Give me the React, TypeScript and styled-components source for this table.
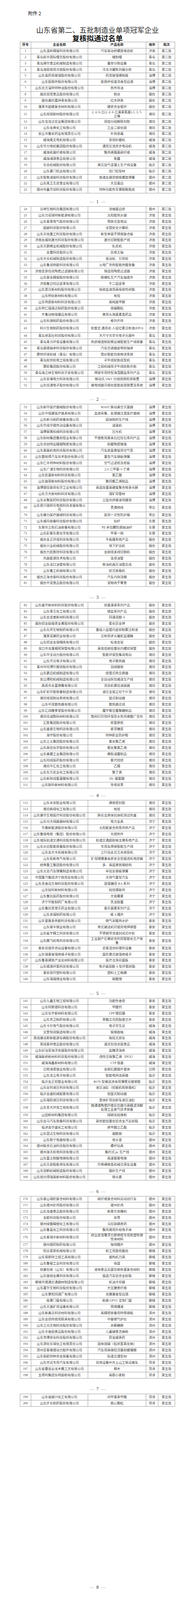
import styled, { createGlobalStyle } from 'styled-components';

// The capture only holds 4096px of height, so every vertical measure of the
// 4839px-tall document is squeezed by this factor; widths stay as they are.
const K = 4096 / 4839;
const v = (px: number): number => +(px * K).toFixed(3);

const FIRST_SHEET_H = v(623.3);
const SHEET_H = v(598.73);
const ROW_H = v(18.76);
const TALL_H = v(26.3);
const LINE = '#9a9a9a';

const GlobalStyle = createGlobalStyle`
  html, body {
    margin: 0;
    padding: 0;
    background: #fff;
  }
  body {
    font-family: "Liberation Serif", "Noto Sans CJK SC", serif;
    color: #444;
  }
`;

// company|product|city, "^" marks a line break inside a cell
const RAW = `山东温岭精锻科技有限公司|汽车驱动桥螺旋锥齿轮|济南
青岛前丰国际帽艺股份有限公司|缝制帽|青岛
青岛建华食品机械制造有限公司|屠宰分割设备|青岛
青岛海容商用冷链股份有限公司|冷冻冷藏陈列展示柜|青岛
山东省药用玻璃股份有限公司|药用玻璃模制瓶|淄博
山东扳倒井股份有限公司|扳倒井低度浓香型白酒|淄博
山东北方淄特特种油股份有限公司|热传导油|淄博
烟台双塔食品股份有限公司|粉丝|烟台
烟台美时嘉钟表有限公司|红木钟表|烟台
蓬莱市超硬复合材料有限公司|硬质合金辊环|烟台
山东旭锐新材股份有限公司|2, 4, 6-三(2, 4, 6-三溴苯氧基)-1, 3, 5-^三嗪|潍坊
山东宝龙达实业集团有限公司|双组分硅酮密封胶|潍坊
山东金典化工有限公司|工业二硫化碳|潍坊
安丘市鲁安药业有限责任公司|扑热息痛|潍坊
威海奥文电机有限公司|家用砂磨机|威海
山东华力电机集团股份有限公司|通用交流异步电动机|威海
威海拓展纤维有限公司|聚丙烯腈基碳纤维|威海
威海浦源食品有限公司|鱼露|威海
东岳机械股份有限公司|蒸压加气混凝土生产线设备|临沂
山东豪门铝业有限公司|铝门铝型材|临沂
山东智衡减振科技股份有限公司|铁道车辆用钢铁螺旋弹簧|德州
山东禹王生态食业有限公司|大豆蛋白|德州
德州市鑫华润科技股份有限公司|特种功能性军需鞋靴鞋底|德州
谷神生物科技集团有限公司|浓缩蛋白质|德州
山东力诺瑞特新能源有限公司|太阳能热水器|济南
山东泰莱电气股份有限公司|预装式变电站|济南
超越科技股份有限公司|全国安全计算机|济南
山东天铭重工科技股份有限公司|新型单面不锈钢复合板|济南
济南金威刻激光科技股份有限公司|激光切割智能产线|济南
山东天鹅棉业机械股份有限公司|轧花机|济南
金雷科技股份公司|风电主轴|济南
山东大众机械制造股份有限公司|驱动轮、引导轮|济南
山东鲁润热能科技有限公司|火电厂余热智能供暖装备|济南
济南圣泉倍进陶瓷过滤器有限公司|铸造用陶瓷过滤器|济南
山东泰金精锻股份有限公司|楔横轧生产汽车轴类件|济南
济南鲁日钧达皮革有限公司|牛二层皮革|济南
山东昊月新材料股份有限公司|吸收血液用高吸收性树脂|济南
山东明化新材料有限公司|吡啶|济南
山东明泉新材料科技有限公司|高纯度甲醇|济南
山东明仁福瑞达制药股份有限公司|颈痛颗粒|济南
齐鲁动物保健品有限公司|兽用头孢菌素类药品|济南
山东科源制药股份有限公司|格列齐特|济南
科兴生物制药股份有限公司|依普定,通用名:人促红素注射液(EPO)|济南
青岛卓英社科技股份有限公司|大尺寸光学光电子元器件|青岛
青岛青力环保设备有限公司|热质熔渣制岩棉云端智能生产线装备|青岛
青岛泰德轴承科技股份有限公司|汽车空调器皮带轮轴承|青岛
赛特环球机械（青岛）有限公司|筒纱智能包装物流系统|青岛
青岛软控机电工程有限公司|子午线轮胎成型机|青岛
赛轮集团股份有限公司|工程机械用子午线轮胎外胎|青岛
青岛海之林生物科技开发有限公司|焊接专用特型海藻酸盐系列产品|青岛
山东安澜电力科技有限公司|移动式 10kV 分线线损检测装置|淄博
山东信通电子股份有限公司|输电线路可视化智能巡视装置及系统|淄博
山东新华医疗器械股份有限公司|MAST 脉动真空灭菌器|淄博
山东中保康医疗器具有限公司|血液采集、处理输注类医疗器械|淄博
山东新马制药装备有限公司|固体制剂生产线|淄博
山东华成中德传动设备有限公司|减速机|淄博
淄博泰鼎机械科技有限公司|压光机|淄博
山东耐材集团鲁耐窑业有限公司|干熄焦用莫来石红柱石系列产品|淄博
山东合创明业精细陶瓷有限公司|耐磨陶瓷微珠|淄博
山东泰展机电科技股份有限公司|汽车底盘悬架用空气泵|淄博
山东雷帕得汽车技术股份有限公司|重型汽车钢板弹簧|淄博
山东仁丰特种材料股份有限公司|空气过滤纸及纸板|淄博
山东广浦生物科技有限公司|2,3-二甲基-1-丁烯|淄博
山东民基新材料科技有限公司|氯乙酸|淄博
山东森荣新材料股份有限公司|聚四氟乙烯制品|淄博
淄博德信联邦化学工业有限公司|高固含量高硬度聚合物多元醇|淄博
山东方大新材料科技有限公司|煤矿用管材|淄博
山东永聚医药科技股份有限公司|三层共挤输液用膜袋|淄博
山东泉兴银桥光电缆科技发展有限公^司|贯通地线|枣庄
山东康力医疗器械科技有限公司|医用一次性防护服|枣庄
山东威玛装备科技股份有限公司|钻杆|东营
东营市三和石油装备有限公司|PE 半包覆防腐抽油杆|东营
山东彩客东奥化学有限公司|甲苯一硝|东营
烟台金正环保科技有限公司|平板膜系统产品|烟台
烟台兴业机械股份有限公司|地下铲运机|烟台
烟台力凯数控科技有限公司|金刚线多线切割机|烟台
杰森能源技术有限公司|连续油管|烟台
山东龙口油管有限公司|柴油机高压油管总成|烟台
山东鲁工机械有限公司|轮式装载机|烟台
烟台正海合泰科技股份有限公司|汽车内饰顶棚|烟台
烟台中宠食品股份有限公司|宠物肉干零食|烟台
山东盛华新材料科技股份有限公司|烷基溴苯系列产品|烟台
山东莱玉化工有限公司|镁盐系列产品|烟台
山东金宜善新材料有限公司|四溴双酚 A|烟台
烟台招金励福贵金属股份有限公司|氰化亚金钾|烟台
山东先声生物制药有限公司|重组人血管内皮抑制素注射液|烟台
蓬莱诺康药业有限公司|注射用矛头蝮蛇血凝酶|烟台
山东招金金银精炼有限公司|标准金锭|烟台
龙口市龙蓬精密铜管有限公司|高效低耗轻量化内螺纹铜管|烟台
山东华全动力股份有限公司|智能环保型集成电站|潍坊
山东开元电子有限公司|电子散热器|潍坊
青州市坦博尔服饰股份有限公司|羽绒服装|潍坊
山东豪迈机械制造有限公司|绕管式热交换器|潍坊
安丘博阳机械制造有限公司|全自动拆包输送生产线|潍坊
昌邑市永富弹簧有限公司|洗衣机悬挂减振器|潍坊
山东矿机华能装备制造有限公司|液压支架立柱千斤顶|潍坊
潍坊埃锐制动系统有限公司|鼓式制动器|潍坊
山东中茂散热器有限公司|散热器总成|潍坊
山东汇润膳食堂股份有限公司|魔芋葡甘露聚糖制品|潍坊
潍坊佳诚数码材料有限公司|数码打印用环保型水性丙烯酸广告布|潍坊
汇胜集团股份有限公司|纸管原纸|潍坊
山东盛泰生物科技有限公司|麦芽糖浆|潍坊
海宇股份有限公司|特种职业防护鞋|潍坊
山东三义集团股份有限公司|氯化聚乙烯|潍坊
山东高信化学股份有限公司|氯化聚氯乙烯|潍坊
山东美晨工业集团有限公司|橡胶减震制品|潍坊
山东同成医药股份有限公司|氯代烷烃|潍坊
潍坊中汇化工有限公司|乙腈|潍坊
山东东方宏业化工有限公司|聚丁烯|潍坊
山东新和成氨基酸有限公司|DL-蛋氨酸|潍坊
山东联科新材料有限公司|导电炭黑|潍坊
山东永安胶业有限公司|建筑密封胶|潍坊
潍坊新绿化工有限公司|吡啶|潍坊
山东康华生物医疗科技股份有限公司|肺炎支原体抗体检测试剂盒|潍坊
山东光大线路器材有限公司|电力金具|济宁
华春新能源股份有限公司|太阳能复合热泵供热产品|济宁
山东鲁强电缆（集团）股份有限公司|光缆附件|济宁
山东城际轨道交通科技股份有限公司|轨道交通超耐候支撑系统产品|济宁
山东水泊智能装备股份有限公司|专用车焊接智能生产线|济宁
山东金大丰机械有限公司|三行自走式玉米收获机|济宁
山东拓新电气有限公司|矿用隔爆兼本质安全型掘进机电控箱|济宁
经典重工集团股份有限公司|多、高层建筑钢结构|济宁
山东太岳汽车弹簧制造有限公司|半挂车钢板弹簧|济宁
中国重汽集团济宁商用车有限公司|天然气重型汽车|济宁
山东圣香远生物科技股份有限公司|甜菊糖苷 RA 系列|济宁
山东硅科新材料有限公司|硅烷偶联剂|济宁
山东鲁抗医药股份有限公司|大观霉素|济宁
济宁华能制药厂有限公司|芪龙胶囊|济宁
山东鲁抗舍里乐药业有限公司|泰乐菌素系列产品|济宁
山东良福制药有限公司|维 A 酸片|济宁
山东爱客多热能科技有限公司|燃气采暖热水炉|泰安
山东泰丰钢业有限公司|带式输送机托辊用电焊钢管|泰安
山东淼宇精工科技有限公司|不锈钢窄流道封闭式叶轮|泰安
山东腾飞机电科技有限公司|工业副产石膏综合利用智能化生产装^备|泰安
泰安岳首拌合站设备有限公司|沥青混合料搅拌设备|泰安
山东瑞泰玻璃绝缘子有限公司|盘形悬式玻璃绝缘子|泰安
山东鲁泰建筑产业化材料有限公司|医疗洁净抗菌板|泰安
山东德源环氧科技有限公司|电子级双酚 A 型环氧树脂|泰安
泰安现代塑料有限公司|塑料土工格栅|泰安
山东瑞福锂业有限公司|碳酸锂|泰安
山东九鑫生物工程有限公司|功能性香皂|泰安
山东阿斯德科技有限公司|甲酸钙|泰安
山东长宇新材料有限公司|CPP 镀铝膜|泰安
山东京卫制药有限公司|草酸艾司西酞普兰片|泰安
山东卡尔电气股份有限公司|电子学生证|威海
文登恒润锻造有限公司|锻钢曲轴|威海
荣成康派斯新能源车辆股份有限公司|拖挂式房车|威海
荣成泰祥食品股份有限公司|速冻包馅米面食品|威海
山东好当家海洋发展股份有限公司|盐腌渍海参|威海
威海联桥新材料科技股份有限公司|改性交联聚乙烯（PEX）|威海
威海海鑫新材料有限公司|CTP 版基|威海
日照海恩锯业有限公司|金刚石圆锯片基体|日照
山东龙立电子有限公司|智能电网连接器|临沂
临沂金正阳管业有限公司|Φ159 型输送流体用薄壁无缝钢管|临沂
山东金利液压科技有限公司|液压油缸（挖掘机和装载机）|临沂
临沂金盛机械配套有限公司|钳盘式制动器|临沂
山东福阳液压科技有限公司|宽体矿用自卸车液压油缸|临沂
山东圣大环保工程有限公司|微通道陶瓷纤维反应器与高精滤消解^处理工业废气技术装备|临沂
山田新材料集团有限公司|绿碳化硅微粉|临沂
山东金马汽车装备科技有限公司|高性能轻量化铝合金汽车轮毂|临沂
临沭县华盛化工有限公司|原甲酸三乙酯|临沂
山东昆达生物科技有限公司|烟酰胺|临沂
山东胜宁电器有限公司|电水壶|德州
德州联合石油科技股份有限公司|螺杆钻具|德州
德州海天机电科技有限公司|集约式 pc 生产线|德州
山东富士制御电梯有限公司|高速载客电梯|德州
山东天辰智能停车有限公司|升降横移类机械式停车设备|德州
山东双鹤机械制造股份有限公司|猫砂生产线|德州
山东旭光得瑞高新材料股份有限公司|铸元素|德州
山东泰山瑞豹复合材料有限公司|碳纤维复合材料运动自行车|德州
山东德州扒鸡股份有限公司|德州扒鸡|德州
山东龙盛食品股份有限公司|新奥尔良腌料|德州
金能科技股份有限公司|炭黑|德州
德州绿霸精细化工有限公司|马拉硫磷原药|德州
山东鲁晶化工科技有限公司|聚丙烯用外给电子体|德州
山东泰瑞丰新材料有限公司|挤出发泡零浮力脐带缆专用热塑性弹^性体材料|德州
德州德药制药有限公司|咖啡酸片|德州
阳谷昊泉机械有限公司|桩工用旋挖截齿|聊城
山东易斯特工程工具有限公司|盾构机刀具|聊城
山东鲁磁工业科技有限公司|吸盘|聊城
纷美包装（山东）有限公司|液体食品无菌包装纸基复合材料|聊城
山东骏程金属科技有限公司|锻造汽车铝合金轮毂|聊城
聊城市德通交通器材制造有限公司|机油冷却器|聊城
山东嘉华生物科技股份有限公司|大豆膳食纤维|聊城
山东景阳冈酒厂有限公司|浓酱兼香型白酒|聊城
极景门窗有限公司|高端 UPVC 定制门窗|聊城
山东天盾矿用设备有限公司|预埋槽道|聊城
山东新美达科技材料有限公司|高精密装备用特殊钢板|滨州
山东金佰特商用厨具有限公司|中餐燃气炉灶|滨州
山东三元生物科技股份有限公司|赤藓糖醇|滨州
山东丰香园食品股份有限公司|儿童辅食芝麻粉|滨州
山东京博农化科技股份有限公司|茚虫威原药|滨州
山东滨化东瑞化工有限责任公司|固体烧碱（粒状氢氧化钠）|滨州
滨州亚泰雅德动力配件有限公司|汽车用高端铝活塞耐磨镶圈|滨州
山东裕航特种合金装备有限公司|轨道交通型材|滨州
山东世运专用汽车有限公司|风电设备叶片上山工装运输车|菏泽
山东省曹县云龙木雕工艺有限公司|桐木|菏泽
五得利集团东明面粉有限公司|高筋小麦粉|菏泽
山东省越兴化工有限公司|间甲基苯甲酸|菏泽
山东步长制药股份有限公司|稳心颗粒|菏泽`;

interface IEntry {
  no: number;
  company: string;
  product: string;
  city: string;
  batch: string;
}

const ENTRIES: IEntry[] = RAW.split('\n').map((line, i) => {
  const [company, product, city] = line.split('|');
  const no = i + 1;
  return {
    no,
    company: company.replace('^', '\n'),
    product: product.replace('^', '\n'),
    city,
    batch: no <= 24 ? '第二批' : '第五批'
  };
});

// last row number printed on each page
const PAGE_ENDS = [23, 52, 81, 111, 140, 169, 198, 200];
const TALL_ROWS = new Set([43]);

const Sheet = styled.section<{ $height: number; $first?: boolean }>`
  display: flex;
  flex-direction: column;
  box-sizing: border-box;
  height: ${({ $height }) => $height}px;
  padding-top: ${({ $first }) => ($first ? v(32) : 0)}px;
`;

const AnnexLabel = styled.div`
  padding-left: 72px;
  font-family: "Noto Sans CJK SC", sans-serif;
  font-size: 12px;
  line-height: ${v(16)}px;
  color: #111;
`;

const Title = styled.h1`
  margin: ${v(30)}px 0 0;
  text-align: center;
  font-family: "Noto Sans CJK SC", sans-serif;
  font-size: 18.5px;
  font-weight: 400;
  line-height: ${v(24)}px;
  color: #2a2a2a;
`;

const Subtitle = styled.h2`
  margin: ${v(2)}px 0 0;
  text-align: center;
  font-family: "Noto Sans CJK SC", sans-serif;
  font-size: 18.5px;
  font-weight: 700;
  line-height: ${v(22)}px;
  color: #111;
`;

const Table = styled.div`
  box-sizing: border-box;
  width: 398.6px;
  margin: 0 auto;
  border: 1px solid ${LINE};
  border-bottom: none;
`;

const Row = styled.div<{ $tall?: boolean }>`
  display: grid;
  grid-template-columns: 28px 146.4px 148.8px 30.8px 1fr;
  box-sizing: border-box;
  min-height: ${({ $tall }) => ($tall ? TALL_H : ROW_H)}px;
  border-bottom: 1px solid ${LINE};
`;

const Cell = styled.div<{ $head?: boolean }>`
  display: flex;
  align-items: center;
  justify-content: center;
  min-width: 0;
  overflow: hidden;
  padding: 0.5px 2px;
  border-right: 1px solid ${LINE};
  text-align: center;
  white-space: pre;
  font-size: 8.33px;
  line-height: 10px;
  font-weight: ${({ $head }) => ($head ? 700 : 400)};
  color: ${({ $head }) => ($head ? '#1e1e1e' : '#444')};

  &:last-child {
    border-right: none;
  }
`;

const Folio = styled.div`
  display: flex;
  justify-content: center;
  gap: 6px;
  margin-top: auto;
  margin-bottom: ${v(13.3) - 6.75}px;
  height: 13.5px;
  line-height: 13.5px;
  font-size: 12px;
  color: #333;
`;

const Dash = styled.span`
  color: #888;
`;

function HeaderRow(): JSX.Element {
  return (
    <Row>
      <Cell $head>序号</Cell>
      <Cell $head>企业名称</Cell>
      <Cell $head>产品名称</Cell>
      <Cell $head>地市</Cell>
      <Cell $head>批次</Cell>
    </Row>
  );
}

function EntryRow({ entry }: { entry: IEntry }): JSX.Element {
  return (
    <Row $tall={TALL_ROWS.has(entry.no)}>
      <Cell>{entry.no}</Cell>
      <Cell>{entry.company}</Cell>
      <Cell>{entry.product}</Cell>
      <Cell>{entry.city}</Cell>
      <Cell>{entry.batch}</Cell>
    </Row>
  );
}

function Page({ page, entries }: { page: number; entries: IEntry[] }): JSX.Element {
  const first = page === 1;
  return (
    <Sheet $height={first ? FIRST_SHEET_H : SHEET_H} $first={first}>
      {first && (
        <>
          <AnnexLabel>附件 2</AnnexLabel>
          <Title>山东省第二、五批制造业单项冠军企业</Title>
          <Subtitle>复核拟通过名单</Subtitle>
        </>
      )}
      <Table>
        {first && <HeaderRow />}
        {entries.map((e) => (
          <EntryRow key={e.no} entry={e} />
        ))}
      </Table>
      <Folio>
        <Dash>—</Dash>
        <span>{page}</span>
        <Dash>—</Dash>
      </Folio>
    </Sheet>
  );
}

export default function App(): JSX.Element {
  let start = 0;
  const pages = PAGE_ENDS.map((end) => {
    const slice = ENTRIES.slice(start, end);
    start = end;
    return slice;
  });

  return (
    <>
      <GlobalStyle />
      {pages.map((entries, i) => (
        <Page key={i} page={i + 1} entries={entries} />
      ))}
    </>
  );
}
